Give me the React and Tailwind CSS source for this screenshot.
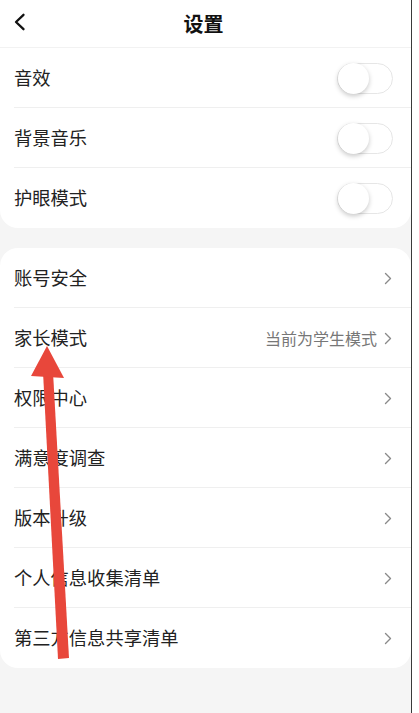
const FONT = { fontFamily: '"Noto Sans CJK SC", "Noto Sans", sans-serif' };

const TOGGLES = ["音效", "背景音乐", "护眼模式"];

const LINKS = [
  { label: "账号安全" },
  { label: "家长模式", value: "当前为学生模式" },
  { label: "权限中心" },
  { label: "满意度调查" },
  { label: "版本升级" },
  { label: "个人信息收集清单" },
  { label: "第三方信息共享清单" },
];

function Chevron() {
  return (
    <svg width="8" height="13" viewBox="0 0 8 13" fill="none">
      <polyline
        points="1.5,1.5 6.5,6.5 1.5,11.5"
        stroke="#8a8a8a"
        strokeWidth="1.4"
        strokeLinecap="round"
        strokeLinejoin="round"
      />
    </svg>
  );
}

function Toggle() {
  return (
    <div className="w-[56px] h-[31px] rounded-full border border-[#e6e6e6] bg-white relative">
      <div className="absolute left-0 top-[-1px] w-[31px] h-[31px] rounded-full bg-white shadow-[0_2px_5px_rgba(0,0,0,0.22)]" />
    </div>
  );
}

function Row({ children, last }) {
  return (
    <div className="h-[60px] pl-[14px] relative flex items-center">
      {children}
      {!last && (
        <div className="absolute left-[14px] right-0 bottom-0 h-px bg-[#efefef]" />
      )}
    </div>
  );
}

export default function App() {
  return (
    <div className="w-[419px] h-[713px] flex bg-white overflow-hidden" style={FONT}>
      <div className="w-[411px] h-full bg-[#f5f5f5] relative flex flex-col">
        {/* Header */}
        <div className="h-[48px] bg-white border-b border-[#f2f2f2] flex items-center justify-center relative shrink-0">
          <svg
            className="absolute left-[13px] top-[13px]"
            width="14"
            height="18"
            viewBox="0 0 14 18"
            fill="none"
          >
            <polyline
              points="10.5,1.8 3,9 10.5,16.2"
              stroke="#111"
              strokeWidth="2.3"
              strokeLinecap="round"
              strokeLinejoin="round"
            />
          </svg>
          <span className="text-[20px] font-bold text-[#111] leading-none -ml-[4px]">
            设置
          </span>
        </div>

        {/* Toggles */}
        <div className="bg-white rounded-b-[18px]">
          {TOGGLES.map((t, i) => (
            <Row key={t} last={i === TOGGLES.length - 1}>
              <span className="flex-1 text-[18.3px] text-[#222]">{t}</span>
              <div className="pr-[18px]">
                <Toggle />
              </div>
            </Row>
          ))}
        </div>

        {/* Links */}
        <div className="bg-white rounded-[18px] mt-[20px]">
          {LINKS.map((l, i) => (
            <Row key={l.label} last={i === LINKS.length - 1}>
              <span className="flex-1 text-[18.3px] text-[#222]">{l.label}</span>
              {l.value && (
                <span className="text-[16px] text-[#777] mr-[7px]">{l.value}</span>
              )}
              <div className="pr-[19px] flex items-center">
                <Chevron />
              </div>
            </Row>
          ))}
        </div>

        {/* Annotation arrow */}
        <svg
          className="absolute left-0 top-0 pointer-events-none"
          width="411"
          height="713"
          viewBox="0 0 411 713"
        >
          <polygon points="43,372 53,372 69,658 58,659" fill="#e8473b" />
          <polygon points="47,346 31,376 64,378" fill="#e8473b" />
        </svg>
      </div>
      <div className="w-px h-full bg-[#3a3a3a]" />
    </div>
  );
}
